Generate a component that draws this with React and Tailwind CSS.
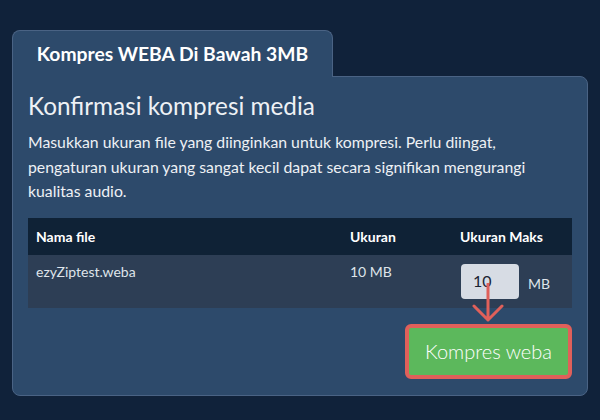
import React from 'react';

const App = () => {
  return (
    <div className="w-[600px] h-[420px] bg-[#10223a] pt-[30px] px-3 font-['Lato','Noto_Sans',sans-serif]">
      {/* Tab */}
      <div className="relative z-10 -mb-px flex h-[47px] w-[321px] items-center justify-center rounded-t-lg border border-b-0 border-[#4a6384] bg-[#2d4a6b]">
        <h1 className="text-[19.3px] font-bold text-white">Kompres WEBA Di Bawah 3MB</h1>
      </div>

      {/* Panel */}
      <div className="w-[576px] rounded-b-lg rounded-tr-lg border border-[#4a6384] bg-[#2d4a6b] px-[15px] pt-[14px] pb-[16px]">
        <h2 className="text-[24.3px] leading-[1.2] text-[#eef1f5]">Konfirmasi kompresi media</h2>
        <p className="mt-[10px] text-[15.8px] leading-[24.5px] text-[#eef1f5]">
          Masukkan ukuran file yang diinginkan untuk kompresi. Perlu diingat, pengaturan ukuran yang sangat kecil dapat secara signifikan mengurangi kualitas audio.
        </p>

        {/* Table */}
        <div className="mt-[14px] w-[544px]">
          <div className="grid h-[37px] grid-cols-[314px_110px_120px] items-center bg-[#0f2236] text-[14px] font-bold text-white">
            <div className="px-2">Nama file</div>
            <div className="px-2">Ukuran</div>
            <div className="px-2">Ukuran Maks</div>
          </div>
          <div className="grid h-[53px] grid-cols-[314px_110px_120px] bg-[#2d3e55] text-[14px] text-[#dfe4ea]">
            <div className="px-2 pt-[6px]">ezyZiptest.weba</div>
            <div className="px-2 pt-[6px]">10 MB</div>
            <div className="relative flex items-start gap-[9px] px-[9px] pt-[9px]">
              <div className="flex h-[35px] w-[58px] items-center rounded-sm bg-[#d7dce4] pl-3 text-[16px] text-[#1b2533]">10</div>
              <span className="mt-[9px] text-[14px]">MB</span>
              <svg className="absolute left-[20px] top-[28px]" width="32" height="40" viewBox="0 0 32 40" fill="none">
                <path d="M16 1 V37 M2 23 L16 37 L30 23" stroke="#e0605a" strokeWidth="3" strokeLinecap="round" strokeLinejoin="round" />
              </svg>
            </div>
          </div>
        </div>

        {/* Button */}
        <div className="mt-4 flex justify-end">
          <button className="h-[55px] w-[167px] rounded-[6px] border-4 border-[#e0605a] bg-[#5cb85c] text-[20px] font-light text-white">
            Kompres weba
          </button>
        </div>
      </div>
    </div>
  );
};

export default App;
